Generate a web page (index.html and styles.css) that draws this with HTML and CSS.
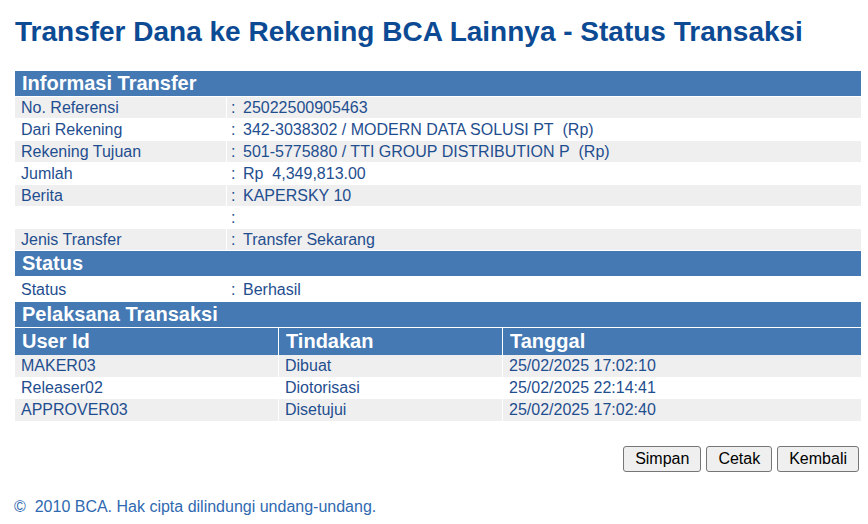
FILE: index.html
```html
<!DOCTYPE html>
<html lang="id">
<head>
  <meta charset="UTF-8" />
  <title>Status Transaksi</title>
  <link rel="stylesheet" href="styles.css">
</head>
<body>

  <h1 class="page-title">Transfer Dana ke Rekening BCA Lainnya - Status Transaksi</h1>

  <!-- Informasi + Status -->
  <div class="panel">
    <div class="band">Informasi Transfer</div>
    <div class="row grey"><div class="label">No. Referensi</div><div class="value"><span class="colon">:</span>25022500905463</div></div>
    <div class="row"><div class="label">Dari Rekening</div><div class="value"><span class="colon">:</span>342-3038302 / MODERN DATA SOLUSI PT&nbsp;&nbsp;(Rp)</div></div>
    <div class="row grey"><div class="label">Rekening Tujuan</div><div class="value"><span class="colon">:</span>501-5775880 / TTI GROUP DISTRIBUTION P&nbsp;&nbsp;(Rp)</div></div>
    <div class="row"><div class="label">Jumlah</div><div class="value"><span class="colon">:</span>Rp&nbsp;&nbsp;4,349,813.00</div></div>
    <div class="row grey"><div class="label">Berita</div><div class="value"><span class="colon">:</span>KAPERSKY 10</div></div>
    <div class="row"><div class="label"></div><div class="value"><span class="colon">:</span></div></div>
    <div class="row grey"><div class="label">Jenis Transfer</div><div class="value"><span class="colon">:</span>Transfer Sekarang</div></div>

    <div class="band">Status</div>
    <div class="row tall"><div class="label">Status</div><div class="value"><span class="colon">:</span>Berhasil</div></div>
  </div>

  <!-- Pelaksana -->
  <div class="panel second">
    <div class="band">Pelaksana Transaksi</div>
    <div class="log head"><div>User Id</div><div>Tindakan</div><div>Tanggal</div></div>
    <div class="log grey"><div>MAKER03</div><div>Dibuat</div><div>25/02/2025 17:02:10</div></div>
    <div class="log"><div>Releaser02</div><div>Diotorisasi</div><div>25/02/2025 22:14:41</div></div>
    <div class="log grey"><div>APPROVER03</div><div>Disetujui</div><div>25/02/2025 17:02:40</div></div>
  </div>

  <div class="actions">
    <button type="button">Simpan</button>
    <button type="button">Cetak</button>
    <button type="button">Kembali</button>
  </div>

  <div class="footer">&copy;&nbsp;&nbsp;2010 BCA. Hak cipta dilindungi undang-undang.</div>

</body>
</html>
```

FILE: styles.css
```css
body {
  margin: 0;
  padding: 0 7px 0 15px;
  background-color: #ffffff;
  font-family: "Liberation Sans", Arial, sans-serif;
  font-size: 16px;
  color: #1f4e8f;
}

.page-title {
  margin: 16px 0 24px 0;
  font-size: 28px;
  font-weight: bold;
  color: #0c4a94;
  line-height: 31px;
}

.panel {
  display: flex;
  flex-direction: column;
  gap: 1px;
}

.panel.second {
  margin-top: 1px;
}

.band {
  height: 25px;
  line-height: 25px;
  padding-left: 7px;
  background-color: #4479b4;
  color: #ffffff;
  font-size: 20px;
  font-weight: bold;
}

.row {
  display: grid;
  grid-template-columns: 211px 1fr;
  column-gap: 1px;
  height: 21px;
  line-height: 21px;
}

.row.tall {
  height: 24px;
  line-height: 25px;
}

.row > div {
  background-color: #ffffff;
}

.row.grey > div {
  background-color: #efefef;
}

.label {
  padding-left: 6px;
}

.value {
  padding-left: 4px;
}

.colon {
  display: inline-block;
  width: 12px;
}

.log {
  display: grid;
  grid-template-columns: 263px 223px 1fr;
  column-gap: 1px;
  height: 21px;
  line-height: 22px;
}

.log > div {
  padding-left: 6px;
  background-color: #ffffff;
}

.log.grey > div {
  background-color: #efefef;
}

.log.head {
  height: 26px;
  line-height: 27px;
}

.log.head > div {
  background-color: #4479b4;
  color: #ffffff;
  font-size: 20px;
  font-weight: bold;
  padding-left: 7px;
}

.actions {
  display: flex;
  justify-content: flex-end;
  gap: 5px;
  margin-top: 26px;
  padding-right: 2px;
}

.actions button {
  height: 26px;
  padding: 0 11px;
  font-family: "Liberation Sans", Arial, sans-serif;
  font-size: 16px;
  color: #000000;
  background-color: #efefef;
  border: 1px solid #767676;
  border-radius: 3px;
}

.footer {
  margin-top: 25px;
  margin-left: -1px;
  color: #2f69b0;
  line-height: 19px;
}
```
